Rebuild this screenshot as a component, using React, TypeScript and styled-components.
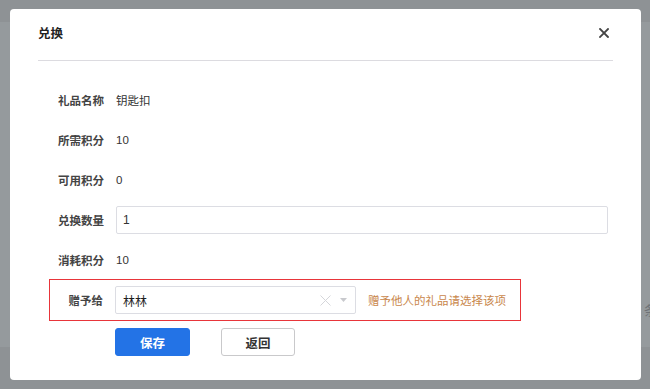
import React from "react";
import styled, { createGlobalStyle } from "styled-components";

const Global = createGlobalStyle`
  html, body { margin: 0; padding: 0; }
  body {
    width: 650px; height: 389px; overflow: hidden;
    font-family: "Liberation Sans", "Noto Sans CJK SC", sans-serif;
    font-size: 12px; color: #333;
  }
`;

const Page = styled.div`
  position: relative;
  width: 650px;
  height: 389px;
  display: flex;
  flex-direction: column;
  overflow: hidden;
`;

const Band = styled.div<{ $h: number; $bg: string }>`
  flex: 0 0 ${(p) => p.$h}px;
  background: ${(p) => p.$bg};
`;

const MiddleBand = styled.div`
  flex: 1 1 auto;
  background: #959a9d;
  display: flex;
  justify-content: flex-end;
  align-items: flex-end;
  padding-bottom: 28px;
  overflow: hidden;
`;

const BehindText = styled.span`
  color: #6f7377;
  font-size: 13px;
  margin-right: -7px;
`;

const Modal = styled.div`
  position: absolute;
  left: 10px;
  top: 9px;
  width: 631px;
  height: 371px;
  background: #fff;
  border-radius: 4px;
  box-sizing: border-box;
  padding: 0 28px;
  display: flex;
  flex-direction: column;
`;

const Header = styled.div`
  height: 52px;
  display: flex;
  align-items: center;
  justify-content: space-between;
  border-bottom: 1px solid #dcdbe0;
  padding-bottom: 4px;
  box-sizing: border-box;
`;

const Title = styled.h2`
  margin: 0;
  font-size: 12.5px;
  font-weight: 700;
  color: #222;
`;

const Close = styled.button`
  border: 0;
  background: none;
  padding: 0;
  margin-right: 3px;
  width: 12px;
  height: 12px;
  display: flex;
  align-items: center;
  justify-content: center;
  cursor: pointer;
`;

const Form = styled.div`
  display: flex;
  flex-direction: column;
  padding: 19px 0 0 11px;
`;

const Row = styled.div`
  height: 40px;
  display: flex;
  align-items: center;
  gap: 12px;
`;

const GiftRow = styled(Row)`
  width: 472px;
  height: 42px;
  margin: -1px 0;
  border: 1px solid #e8353a;
  box-sizing: border-box;
`;

const Label = styled.span<{ $w?: number }>`
  width: ${(p) => p.$w ?? 55}px;
  flex: none;
  text-align: right;
  font-weight: 700;
  color: #444;
  font-size: 11.5px;
`;

const Value = styled.span`
  color: #333;
  font-size: 11.5px;
`;

const TextInput = styled.div<{ $w: number }>`
  width: ${(p) => p.$w}px;
  height: 28px;
  box-sizing: border-box;
  border: 1px solid #dcdde3;
  border-radius: 2px;
  display: flex;
  align-items: center;
  padding: 0 6px;
  font-size: 12px;
  color: #333;
`;

const Select = styled(TextInput)`
  justify-content: space-between;
  padding: 0 8px 0 7px;
  color: #1e1e1e;
`;

const SelectIcons = styled.span`
  display: flex;
  align-items: center;
  gap: 9px;
`;

const Hint = styled.span`
  color: #c9874c;
  font-size: 11.5px;
`;

const Actions = styled.div`
  display: flex;
  gap: 31px;
  padding: 8px 0 0 66px;
`;

const Button = styled.button<{ $primary?: boolean }>`
  width: ${(p) => (p.$primary ? 75 : 74)}px;
  height: 28px;
  border-radius: 3px;
  font-family: inherit;
  font-size: 12.5px;
  font-weight: 700;
  border: 1px solid ${(p) => (p.$primary ? "#2373e6" : "#c9c9cb")};
  background: ${(p) => (p.$primary ? "#2373e6" : "#fff")};
  color: ${(p) => (p.$primary ? "#fff" : "#333")};
  cursor: pointer;
  padding: 0;
`;

export default function App() {
  return (
    <>
      <Global />
      <Page>
        <Band $h={22} $bg="#8e9295" />
        <MiddleBand>
          <BehindText>条</BehindText>
        </MiddleBand>
        <Band $h={42} $bg="#8e9295" />
        <Modal>
          <Header>
            <Title>兑换</Title>
            <Close aria-label="关闭">
              <svg width="10" height="10" viewBox="0 0 10 10">
                <path d="M1 1L9 9M9 1L1 9" stroke="#444" strokeWidth="1.8" strokeLinecap="square" />
              </svg>
            </Close>
          </Header>
          <Form>
            <Row>
              <Label>礼品名称</Label>
              <Value>钥匙扣</Value>
            </Row>
            <Row>
              <Label>所需积分</Label>
              <Value>10</Value>
            </Row>
            <Row>
              <Label>可用积分</Label>
              <Value>0</Value>
            </Row>
            <Row>
              <Label>兑换数量</Label>
              <TextInput $w={492}>1</TextInput>
            </Row>
            <Row>
              <Label>消耗积分</Label>
              <Value>10</Value>
            </Row>
            <GiftRow>
              <Label $w={53}>赠予给</Label>
              <Select $w={241}>
                <span>林林</span>
                <SelectIcons>
                  <svg width="11" height="11" viewBox="0 0 11 11">
                    <path d="M0.5 0.5L10.5 10.5M10.5 0.5L0.5 10.5" stroke="#d5d6da" strokeWidth="1" />
                  </svg>
                  <svg width="7" height="4" viewBox="0 0 7 4">
                    <path d="M0 0H7L3.5 4Z" fill="#c8c9cd" />
                  </svg>
                </SelectIcons>
              </Select>
              <Hint>赠予他人的礼品请选择该项</Hint>
            </GiftRow>
            <Actions>
              <Button $primary>保存</Button>
              <Button>返回</Button>
            </Actions>
          </Form>
        </Modal>
      </Page>
    </>
  );
}
